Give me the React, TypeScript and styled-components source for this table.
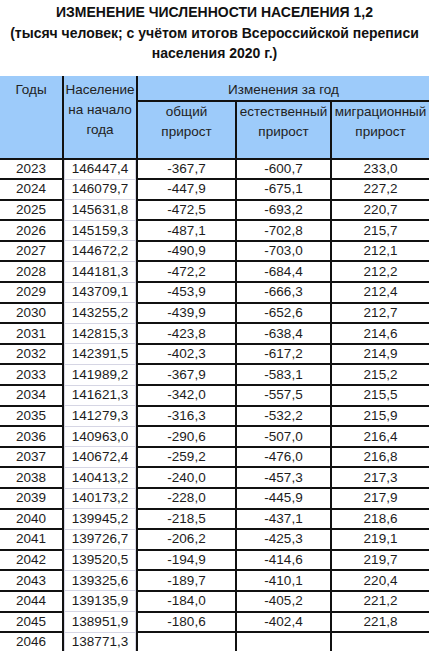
import styled, { createGlobalStyle } from "styled-components";

const GlobalStyle = createGlobalStyle`
  html, body {
    margin: 0;
    padding: 0;
    background: #ffffff;
  }
  body {
    font-family: "Liberation Sans", Arial, sans-serif;
    color: #1a1a1a;
  }
`;

const Page = styled.div`
  width: 429px;
  height: 651px;
  overflow: hidden;
  background: #fff;
`;

const Title = styled.h1`
  margin: 0;
  padding: 2px 4px 0;
  font-size: 14px;
  line-height: 20.5px;
  font-weight: 700;
  text-align: center;
  color: #111;
`;

const TableWrap = styled.div`
  margin-top: 12px;
`;

const Table = styled.table`
  border-collapse: collapse;
  table-layout: fixed;
  width: 429px;
  font-size: 13.5px;
`;

const HeadCell = styled.th`
  background: #9dcbfa;
  font-weight: 400;
  color: #222;
  vertical-align: top;
  text-align: center;
  padding: 4px 0 0;
  line-height: 20px;
  white-space: nowrap;
  overflow: hidden;
  border: 2px solid #111;
  border-top: none;
  &:first-child {
    border-left: none;
  }
  &:last-child {
    border-right: none;
  }
`;

const SubHeadCell = styled(HeadCell)`
  padding: 0;
  height: 56px;
`;

const Row = styled.tr`
  height: 20.6px;
`;

const Cell = styled.td<{ $pop?: boolean }>`
  padding: 0;
  text-align: center;
  line-height: 18px;
  height: 18.6px;
  color: #1c1c1c;
  border: 2px solid #111;
  &:first-child {
    border-left: none;
  }
  &:last-child {
    border-right: none;
  }
  ${(p) =>
    p.$pop &&
    `
    border-top: 1px solid #d6d6e4;
    border-bottom: 1px solid #d6d6e4;
    box-shadow: inset 1px 0 0 #d6d6e4, inset -1px 0 0 #d6d6e4;
  `}
`;

type Item = [number, string, string?, string?, string?];

const data: Item[] = [
  [2023, "146447,4", "-367,7", "-600,7", "233,0"],
  [2024, "146079,7", "-447,9", "-675,1", "227,2"],
  [2025, "145631,8", "-472,5", "-693,2", "220,7"],
  [2026, "145159,3", "-487,1", "-702,8", "215,7"],
  [2027, "144672,2", "-490,9", "-703,0", "212,1"],
  [2028, "144181,3", "-472,2", "-684,4", "212,2"],
  [2029, "143709,1", "-453,9", "-666,3", "212,4"],
  [2030, "143255,2", "-439,9", "-652,6", "212,7"],
  [2031, "142815,3", "-423,8", "-638,4", "214,6"],
  [2032, "142391,5", "-402,3", "-617,2", "214,9"],
  [2033, "141989,2", "-367,9", "-583,1", "215,2"],
  [2034, "141621,3", "-342,0", "-557,5", "215,5"],
  [2035, "141279,3", "-316,3", "-532,2", "215,9"],
  [2036, "140963,0", "-290,6", "-507,0", "216,4"],
  [2037, "140672,4", "-259,2", "-476,0", "216,8"],
  [2038, "140413,2", "-240,0", "-457,3", "217,3"],
  [2039, "140173,2", "-228,0", "-445,9", "217,9"],
  [2040, "139945,2", "-218,5", "-437,1", "218,6"],
  [2041, "139726,7", "-206,2", "-425,3", "219,1"],
  [2042, "139520,5", "-194,9", "-414,6", "219,7"],
  [2043, "139325,6", "-189,7", "-410,1", "220,4"],
  [2044, "139135,9", "-184,0", "-405,2", "221,2"],
  [2045, "138951,9", "-180,6", "-402,4", "221,8"],
  [2046, "138771,3"],
];

export default function App() {
  return (
    <Page>
      <GlobalStyle />
      <Title>
        ИЗМЕНЕНИЕ ЧИСЛЕННОСТИ НАСЕЛЕНИЯ 1,2
        <br />
        (тысяч человек; с учётом итогов Всероссийской переписи
        <br />
        населения 2020 г.)
      </Title>
      <TableWrap>
        <Table>
          <colgroup>
            <col style={{ width: 63 }} />
            <col style={{ width: 74 }} />
            <col style={{ width: 99 }} />
            <col style={{ width: 95 }} />
            <col style={{ width: 98 }} />
          </colgroup>
          <thead>
            <tr>
              <HeadCell rowSpan={2}>Годы</HeadCell>
              <HeadCell rowSpan={2}>
                Население
                <br />
                на начало
                <br />
                года
              </HeadCell>
              <HeadCell colSpan={3}>Изменения за год</HeadCell>
            </tr>
            <tr>
              <SubHeadCell>
                общий
                <br />
                прирост
              </SubHeadCell>
              <SubHeadCell>
                естественный
                <br />
                прирост
              </SubHeadCell>
              <SubHeadCell>
                миграционный
                <br />
                прирост
              </SubHeadCell>
            </tr>
          </thead>
          <tbody>
            {data.map(([year, pop, total, natural, migr]) => (
              <Row key={year}>
                <Cell>{year}</Cell>
                <Cell $pop>{pop}</Cell>
                <Cell>{total}</Cell>
                <Cell>{natural}</Cell>
                <Cell>{migr}</Cell>
              </Row>
            ))}
          </tbody>
        </Table>
      </TableWrap>
    </Page>
  );
}
